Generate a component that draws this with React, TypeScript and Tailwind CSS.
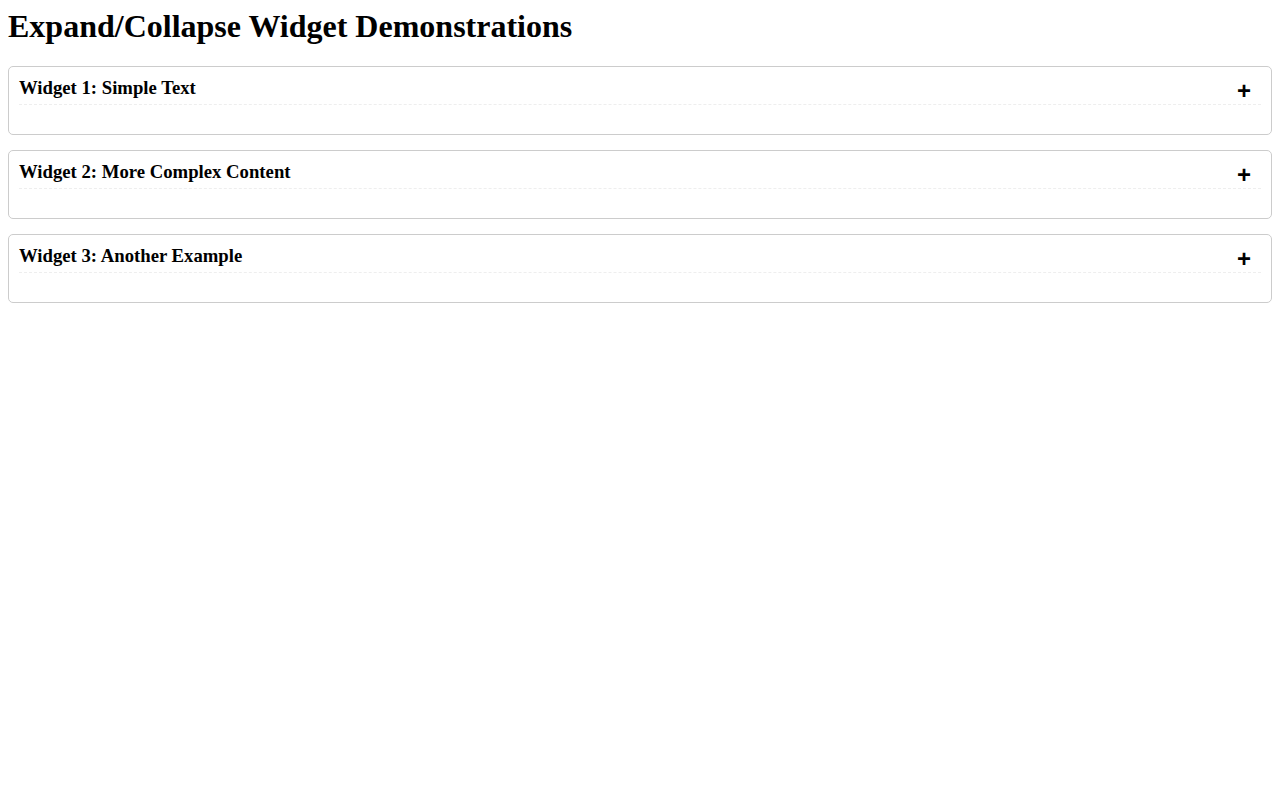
import React, { useState } from 'react';

interface Widget {
  id: number;
  title: string;
  body: string;
}

const widgets: Widget[] = [
  { id: 1, title: 'Widget 1: Simple Text', body: 'This is some simple text content inside the first widget.' },
  { id: 2, title: 'Widget 2: More Complex Content', body: 'A widget with more complex content, such as lists and paragraphs.' },
  { id: 3, title: 'Widget 3: Another Example', body: 'Yet another example of an expandable widget.' },
];

const ExpandWidget: React.FC<{ widget: Widget }> = ({ widget }) => {
  const [open, setOpen] = useState(false);
  return (
    <div className="mb-[15px] rounded-[5px] border border-[#cccccc] p-[10px]">
      <div className="flex items-start justify-between border-b border-dashed border-[#eeeeee]">
        <h3 className="m-0 text-[18.72px] leading-[21.5px] font-bold">{widget.title}</h3>
        <button
          onClick={() => setOpen(!open)}
          className="cursor-pointer bg-transparent px-[10px] font-['Liberation_Sans',Arial,sans-serif] text-[24px] leading-[27px] font-bold"
        >
          {open ? '−' : '+'}
        </button>
      </div>
      <div className="h-[19px]">
        {open && <p className="pt-[10px] text-base">{widget.body}</p>}
      </div>
    </div>
  );
};

export default function App() {
  return (
    <div className="min-h-[800px] bg-white p-2 font-['Liberation_Serif','Times_New_Roman',serif] text-black">
      <h1 className="mb-[21.44px] text-[32px] leading-[37px] font-bold">Expand/Collapse Widget Demonstrations</h1>
      {widgets.map((w) => (
        <ExpandWidget key={w.id} widget={w} />
      ))}
    </div>
  );
}
